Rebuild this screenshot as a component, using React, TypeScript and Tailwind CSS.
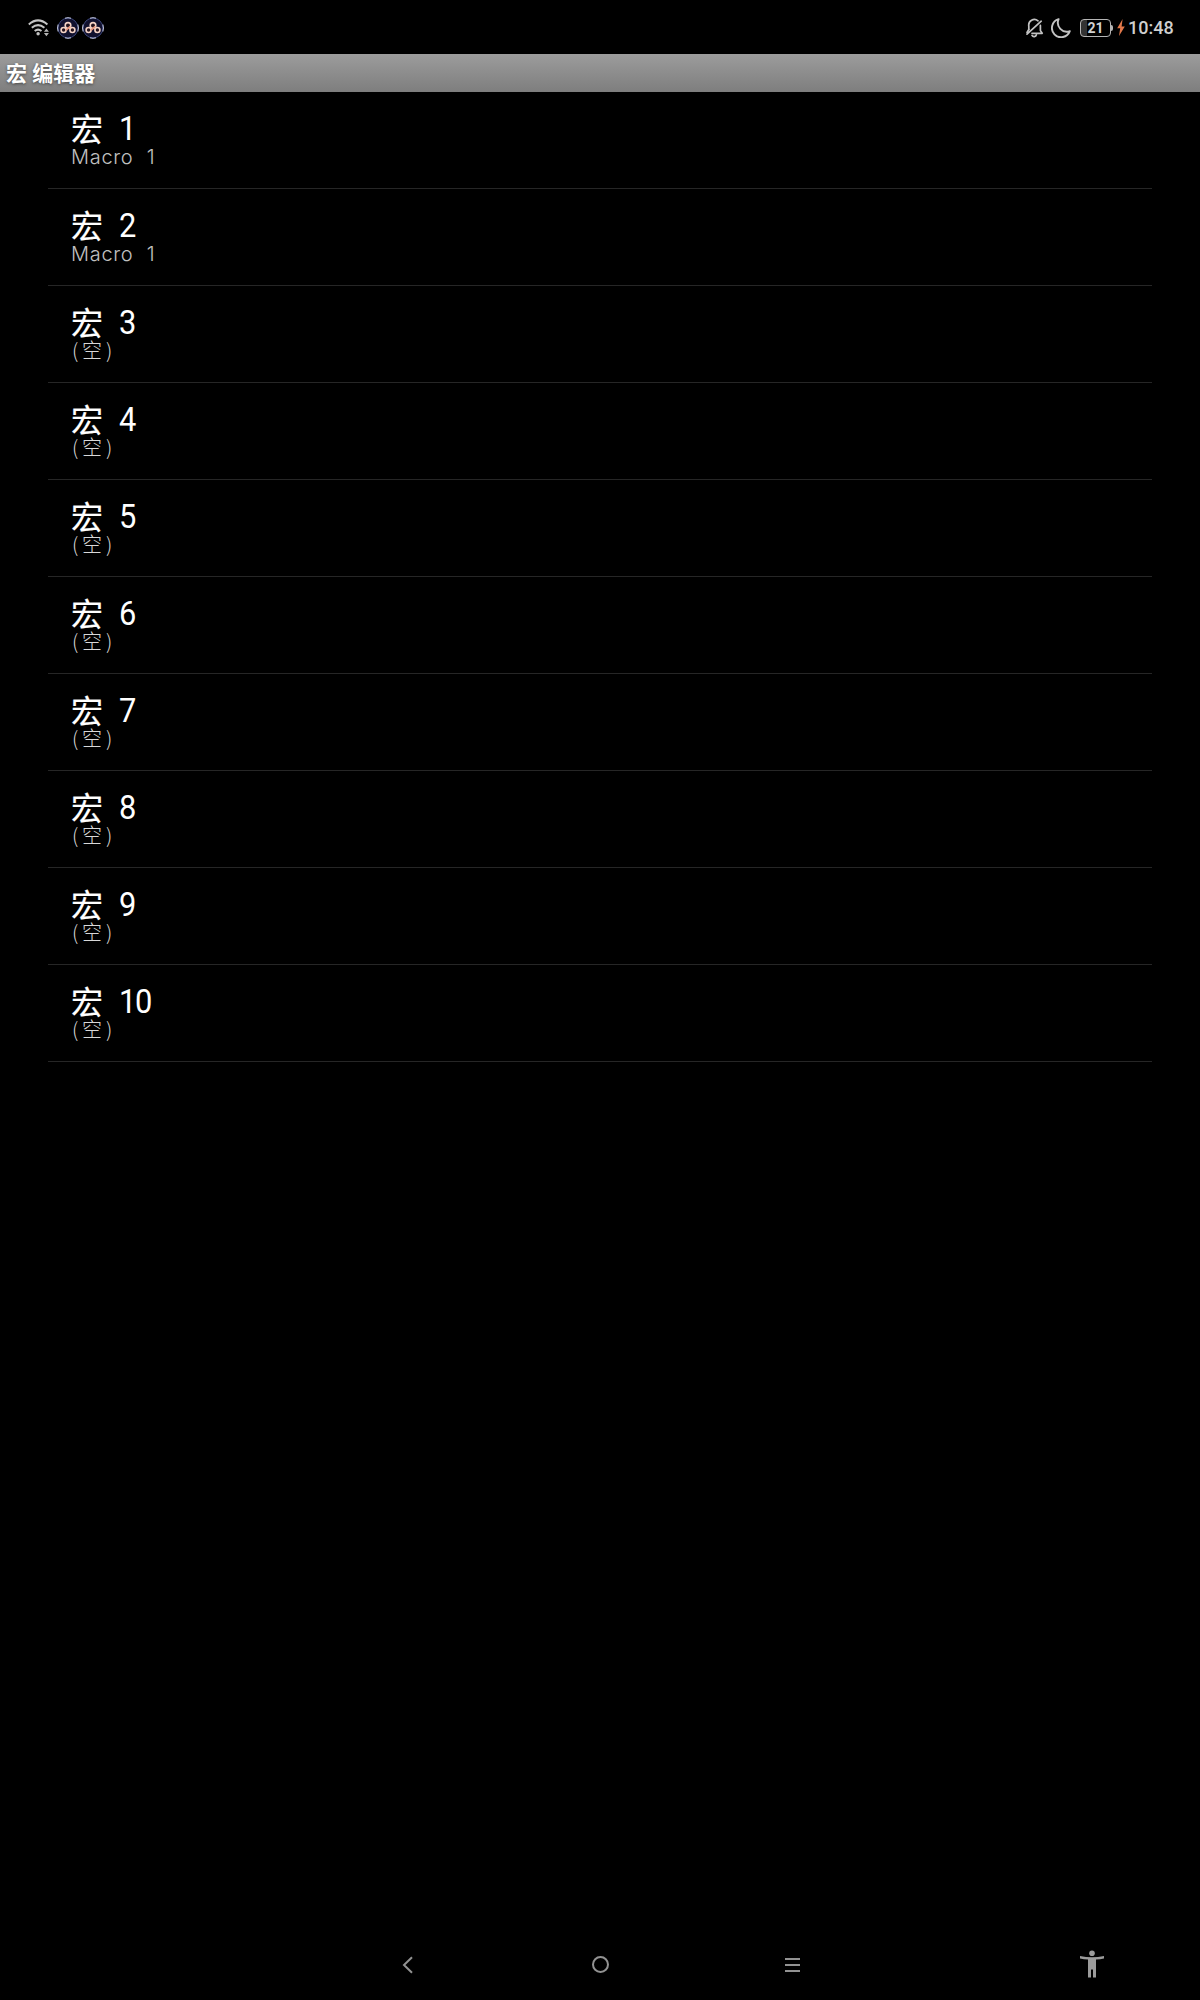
const macros = [
  "Macro 1", "Macro 1", "", "", "", "", "", "", "", "",
];

function Wifi() {
  return (
    <svg className="ml-[28px] h-[20px] w-[22px]" viewBox="0 0 22 20" fill="none" stroke="#c4c4c4" strokeWidth="2">
      <path d="M.8 6.4Q10 -1.6 19.4 6.4" />
      <path d="M3.8 9.8Q10 4.4 16.4 9.8" />
      <path d="M6.7 13Q10 10.2 13.5 13" />
      <circle cx="10.1" cy="15.8" r="1.7" fill="#c4c4c4" stroke="none" />
      <path d="M18.4 10.6l2.5 3.1h-5zM18.4 18.2l2.5-3.1h-5z" fill="#b4b4b4" stroke="none" />
    </svg>
  );
}

function AppBadge() {
  return (
    <svg className="h-[22px] w-[22px]" viewBox="0 0 22 22" fill="none">
      <circle cx="11" cy="11" r="9.9" fill="#11112e" stroke="#3b4578" strokeWidth="1" />
      <path d="M8 1.2Q11 .2 14 1.2M8 20.8Q11 21.8 14 20.8M1.1 7.5Q0 11 1.1 14.5M20.9 7.5Q22 11 20.9 14.5" stroke="#c9cde6" strokeWidth="1" />
      <g stroke="#f4d3c6" strokeWidth="1.6">
        <circle cx="11" cy="8.4" r="2.8" fill="#24131d" />
        <circle cx="6.6" cy="13" r="2.5" fill="#24131d" />
        <circle cx="15.4" cy="13" r="2.5" fill="#24131d" />
      </g>
      <path d="M9 13.4l4.2-4" stroke="#e8957b" strokeWidth="1.7" />
    </svg>
  );
}

function StatusBar() {
  return (
    <div className="flex h-[54px] items-center justify-between pt-px">
      <div className="flex items-center">
        <Wifi />
        <span className="ml-[7px] flex gap-[3px]">
          <AppBadge />
          <AppBadge />
        </span>
      </div>
      <div className="mr-[27px] flex items-center">
        <svg className="h-[20px] w-[18px]" viewBox="0 0 18 20" fill="none" stroke="#c2c2c2" strokeWidth="1.7" strokeLinecap="round" strokeLinejoin="round">
          <path d="M2.8 11.5V8.2a5.7 5.7 0 0 1 9.2-5.4M14.4 7.4v5.2l1.8 2.7H6" />
          <path d="M1 16.2L15.2 3.2M2.8 11.5L1 14.4" />
          <path d="M6 17.4a2.4 2.4 0 0 0 4.4-.6" />
        </svg>
        <svg className="ml-[7px] h-[20px] w-[20px]" viewBox="0 0 20 20" fill="none" stroke="#c2c2c2" strokeWidth="1.9" strokeLinejoin="round">
          <path d="M7.6 1.2A9.2 9.2 0 1 0 18.8 13.2 9 9 0 0 1 7.6 1.2z" />
        </svg>
        <span className="ml-[9px] flex items-center">
          <span className="flex h-[18px] w-[31px] items-center justify-center rounded-[4px] border-[1.5px] border-[#b5b5b5] bg-[linear-gradient(90deg,#333_0_22%,#000_22%)] font-['Roboto',sans-serif] text-[14px] leading-none font-bold text-[#d2d2d2]">21</span>
          <span className="h-[6px] w-[2px] rounded-r bg-[#b5b5b5]" />
        </span>
        <svg className="ml-[4px] h-[17px] w-[8px]" viewBox="0 0 8 17" fill="#e2784a">
          <path d="M5.6 0L.2 9.2h3L2 17l5.8-9.6H4.6z" />
        </svg>
        <span className="ml-[3px] w-[45px] whitespace-nowrap font-['Roboto',sans-serif] text-[18px] leading-none font-medium text-[#cfcfcf]">10:48</span>
      </div>
    </div>
  );
}

export default function App() {
  return (
    <div className="flex h-[2000px] w-[1200px] flex-col overflow-hidden bg-black">
      <StatusBar />
      <header className="flex h-[38px] items-center bg-linear-to-b from-[#9c9c9c] to-[#7e7e7e] pt-[2px] pl-[6px] font-['Roboto','Noto_Sans_CJK_SC',sans-serif] text-[21px] leading-none font-bold text-white [text-shadow:0_1px_3px_#444]">
        宏 编辑器
      </header>
      <ul className="mx-[48px]">
        {macros.map((name, i) => (
          <li key={i} className="flex h-[97px] flex-col border-b border-[#262626] pt-[18px] pl-[23px]">
            <div className="flex h-[34px] items-center leading-none text-white">
              <span className="w-[48px] pb-px font-['Noto_Sans_CJK_SC',sans-serif] text-[32px] [-webkit-text-stroke:.2px_white]">宏</span>
              <span className="origin-left scale-x-[.92] pt-[3px] font-['Roboto',sans-serif] text-[33.5px] tracking-[-1.5px]">{i + 1}</span>
            </div>
            {name ? (
              <div className="mt-[2px] flex h-[21px] items-center font-['Inter',sans-serif] text-[20px] leading-none font-light tracking-[.7px] [word-spacing:7px] whitespace-pre text-[#c0c0c0]">
                {name}
              </div>
            ) : (
              <div className="mt-[2px] flex h-[20px] items-center font-['Noto_Sans_CJK_SC',sans-serif] text-[20px] leading-none font-light text-[#d8d8d8]">
                <span className="w-[11px] pl-px">(</span>
                <span className="w-[24px]">空</span>
                <span>)</span>
              </div>
            )}
          </li>
        ))}
      </ul>
      <nav className="mt-auto flex h-[70px] items-center pb-px">
        <svg className="ml-[402px] h-[18px] w-[12px]" viewBox="0 0 12 18" fill="none" stroke="#929292" strokeWidth="2">
          <path d="M10 1.2L2 9l8 7.8" />
        </svg>
        <span className="ml-[178px] h-[17px] w-[17px] rounded-full border-2 border-[#929292]" />
        <span className="ml-[176px] flex w-[15px] flex-col gap-1">
          <span className="h-[2px] bg-[#929292]" />
          <span className="h-[2px] bg-[#929292]" />
          <span className="h-[2px] bg-[#929292]" />
        </span>
        <svg className="mb-[2px] ml-[280px] h-[28px] w-[24px]" viewBox="0 0 24 28" fill="#9b9b9b">
          <circle cx="12" cy="3.3" r="2.8" />
          <path d="M0 6Q12 8.6 24 6v2.5Q20 9.5 16 9.6V27.5h-3V19.5h-2v8H8V9.6Q4 9.5 0 8.5z" />
        </svg>
      </nav>
    </div>
  );
}
